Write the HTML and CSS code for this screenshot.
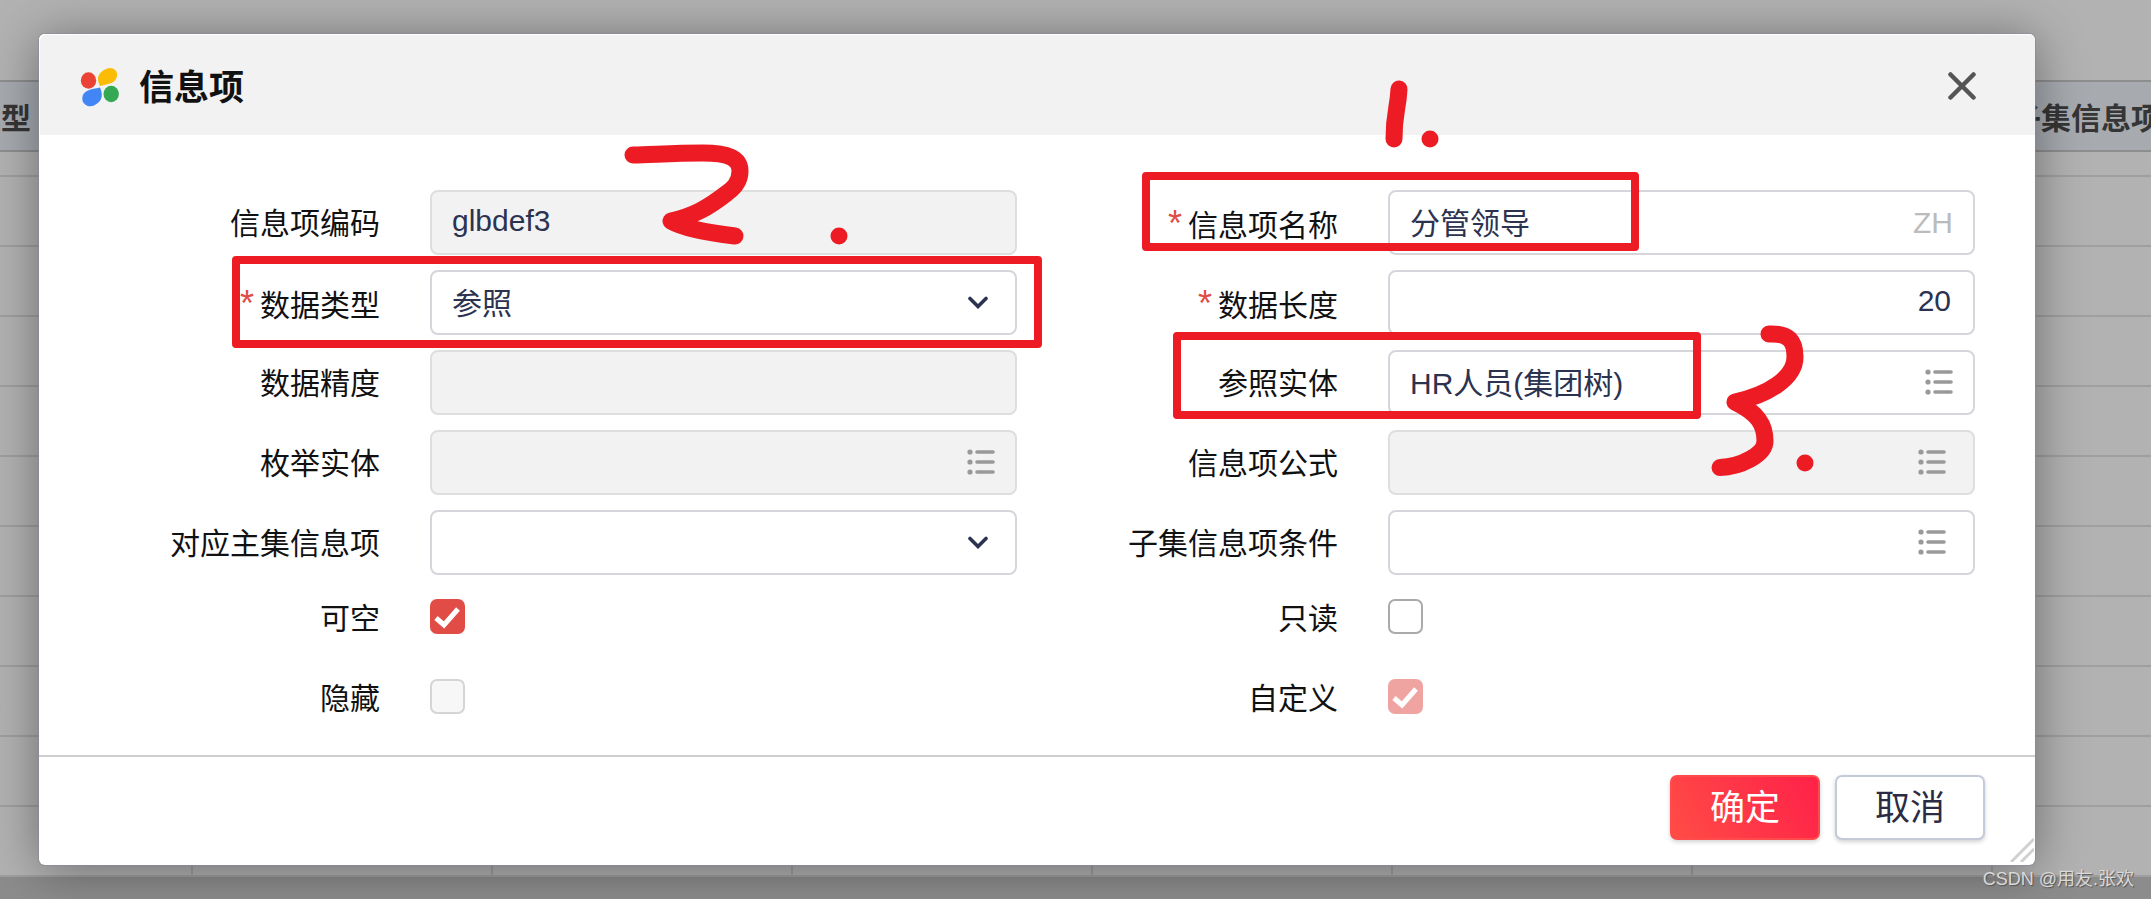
FILE: index.html
```
<!DOCTYPE html>
<html lang="zh-CN">
<head>
    <meta charset="UTF-8">
    <meta name="viewport" content="width=device-width, initial-scale=1.0">
    <title>信息项</title>
    <link rel="stylesheet" href="styles.css">
</head>
<body>

    <svg class="icon-defs" aria-hidden="true">
        <symbol id="icon-list" viewBox="0 0 28 26">
            <g fill="currentColor">
                <circle cx="3" cy="3" r="2.6"/>
                <circle cx="3" cy="13" r="2.6"/>
                <circle cx="3" cy="23" r="2.6"/>
            </g>
            <path d="M10 3h16M10 13h16M10 23h16" fill="none" stroke="currentColor" stroke-width="3.6" stroke-linecap="round"/>
        </symbol>
        <symbol id="icon-down" viewBox="0 0 20 13">
            <path d="M2 2.5l8 8 8-8" fill="none" stroke="currentColor" stroke-width="3.6" stroke-linecap="round"/>
        </symbol>
    </svg>

    <div class="page">
        <table class="grid-table">
            <thead>
                <tr><th>数据类型</th><th></th><th></th><th></th><th></th><th></th><th></th><th>子集信息项条件</th></tr>
            </thead>
            <tbody>
                <tr class="row-cut"><td></td><td></td><td></td><td></td><td></td><td></td><td></td><td></td></tr>
                <tr><td></td><td></td><td></td><td></td><td></td><td></td><td></td><td></td></tr>
                <tr><td></td><td></td><td></td><td></td><td></td><td></td><td></td><td></td></tr>
                <tr><td></td><td></td><td></td><td></td><td></td><td></td><td></td><td></td></tr>
                <tr><td></td><td></td><td></td><td></td><td></td><td></td><td></td><td></td></tr>
                <tr><td></td><td></td><td></td><td></td><td></td><td></td><td></td><td></td></tr>
                <tr><td></td><td></td><td></td><td></td><td></td><td></td><td></td><td></td></tr>
                <tr><td></td><td></td><td></td><td></td><td></td><td></td><td></td><td></td></tr>
                <tr><td>长文本</td><td></td><td></td><td></td><td></td><td></td><td></td><td></td></tr>
                <tr><td></td><td></td><td></td><td></td><td></td><td></td><td></td><td></td></tr>
                <tr class="row-last"><td></td><td></td><td></td><td></td><td></td><td></td><td></td><td></td></tr>
            </tbody>
        </table>
    </div>

    <div class="overlay">
        <form class="dialog" role="dialog" aria-labelledby="dialog-title">
            <header class="dialog-header">
                <svg class="logo" viewBox="0 0 40 40" aria-hidden="true">
                    <ellipse cx="8.500" cy="13.500" rx="7.700" ry="8.300" fill="#ea4335"/>
                    <path d="M20 19C16 11 18 6 26 2C32-1 38 3 37 9C36 16 29 17 20 19Z" fill="#fbbc05"/>
                    <path d="M20 20.500C24 30 21 35 14 38.500C8 41 2 37 2.300 31C3 23 11 22.500 20 20.500Z" fill="#4285f4"/>
                    <ellipse cx="31.200" cy="27" rx="7.700" ry="8.300" fill="#34a853"/>
                </svg>
                <h1 id="dialog-title">信息项</h1>
                <button type="button" class="close" aria-label="关闭">
                    <svg viewBox="0 0 28 28"><path d="M2.500 2.500l23 23M25.500 2.500l-23 23"/></svg>
                </button>
            </header>

            <main class="dialog-body">
                <div class="item">
                    <label for="code">信息项编码</label>
                    <div class="field"><input type="text" id="code" value="glbdef3" disabled></div>
                </div>
                <div class="item required">
                    <label for="name">信息项名称</label>
                    <div class="field">
                        <input type="text" id="name" value="分管领导">
                        <span class="suffix lang">ZH</span>
                    </div>
                </div>
                <div class="item required">
                    <label for="type">数据类型</label>
                    <div class="field">
                        <select id="type"><option>参照</option></select>
                        <svg class="suffix down"><use href="#icon-down"/></svg>
                    </div>
                </div>
                <div class="item required">
                    <label for="length">数据长度</label>
                    <div class="field"><input type="text" id="length" class="number" value="20"></div>
                </div>
                <div class="item">
                    <label for="precision">数据精度</label>
                    <div class="field"><input type="text" id="precision" disabled></div>
                </div>
                <div class="item">
                    <label for="ref">参照实体</label>
                    <div class="field">
                        <input type="text" id="ref" value="HR人员(集团树)">
                        <svg class="suffix list edge"><use href="#icon-list"/></svg>
                    </div>
                </div>
                <div class="item">
                    <label for="enum">枚举实体</label>
                    <div class="field">
                        <input type="text" id="enum" disabled>
                        <svg class="suffix list edge"><use href="#icon-list"/></svg>
                    </div>
                </div>
                <div class="item">
                    <label for="formula">信息项公式</label>
                    <div class="field">
                        <input type="text" id="formula" disabled>
                        <svg class="suffix list"><use href="#icon-list"/></svg>
                    </div>
                </div>
                <div class="item">
                    <label for="main-item">对应主集信息项</label>
                    <div class="field">
                        <select id="main-item"><option></option></select>
                        <svg class="suffix down"><use href="#icon-down"/></svg>
                    </div>
                </div>
                <div class="item">
                    <label for="condition">子集信息项条件</label>
                    <div class="field">
                        <input type="text" id="condition">
                        <svg class="suffix list"><use href="#icon-list"/></svg>
                    </div>
                </div>
                <div class="item check">
                    <label for="nullable">可空</label>
                    <div class="field">
                        <input type="checkbox" id="nullable" checked>
                        <svg class="tick" viewBox="0 0 35 35"><path d="M6 19l8 7 14-16"/></svg>
                    </div>
                </div>
                <div class="item check">
                    <label for="readonly">只读</label>
                    <div class="field"><input type="checkbox" id="readonly"></div>
                </div>
                <div class="item check">
                    <label for="hidden">隐藏</label>
                    <div class="field"><input type="checkbox" id="hidden" disabled></div>
                </div>
                <div class="item check">
                    <label for="custom">自定义</label>
                    <div class="field">
                        <input type="checkbox" id="custom" checked disabled>
                        <svg class="tick" viewBox="0 0 35 35"><path d="M6 19l8 7 14-16"/></svg>
                    </div>
                </div>
            </main>

            <footer class="dialog-footer">
                <button type="submit" class="btn primary">确定</button>
                <button type="button" class="btn">取消</button>
                <svg class="resize" viewBox="0 0 24 24" aria-hidden="true"><path d="M1 24L24 1M11 24L24 11"/></svg>
            </footer>
        </form>
    </div>

    <!-- Hand-drawn marks for the three steps -->
    <svg class="marks" width="2151" height="899" aria-hidden="true">
        <g class="boxes">
            <rect x="1146" y="176" width="489" height="71"/>
            <rect x="236" y="260" width="802" height="84"/>
            <rect x="1177" y="336" width="520" height="79"/>
        </g>
        <g class="strokes">
            <path d="M1399 89C1398 110 1394 112 1394 139"/>
            <path d="M1430 139v.1"/>
            <path d="M633 155C650 155 670 153 703 153C728 153 740 158 740 171C740 184 731 190 727 193C708 208 693 216 671 221C685 229 710 233 735 236"/>
            <path d="M839 236v.1"/>
            <path d="M1769 334C1789 333 1795 341 1795 357C1795 378 1768 395 1735 402C1758 413 1765 425 1765 441C1765 455 1740 467 1720 467.500"/>
            <path d="M1805 463v.1"/>
        </g>
    </svg>
    <div class="watermark">CSDN @用友.张欢</div>

</body>
</html>
```
FILE: styles.css
```
:root {
    --text-color: #111111;
    --value-color: #2b3350;
    --border-color: #d5d5dc;
    --disabled-bg: #f2f2f2;
    --icon-grey: #999999;
    --red: #e14c46;
    --mark-red: #ed1c24;
    --font-family: "Liberation Sans", "Noto Sans CJK SC", sans-serif;
}
* {
    box-sizing: border-box;
}
body {
    margin: 0;
    height: 100vh;
    overflow: hidden;
    position: relative;
    font-family: var(--font-family);
    font-size: 30px;
    color: var(--text-color);
    background: #c9c9c9;
}
.icon-defs {
    position: absolute;
    width: 0;
    height: 0;
}

/* Page behind the dialog */
.page {
    padding-top: 80px;
    overflow: hidden;
    background: #ffffff;
}
.grid-table {
    width: 2400px;
    margin-left: -107px;
    table-layout: fixed;
    border-collapse: separate;
    border-spacing: 0;
}
.grid-table th {
    height: 72px;
    padding: 0 18px;
    text-align: left;
    white-space: nowrap;
    color: #4d4d4d;
    background: #f0f5fd;
    border-top: 2px solid #cccccc;
    border-bottom: 2px solid #cccccc;
}
.grid-table td {
    height: 70px;
    padding: 0 18px;
    line-height: 40px;
    border-bottom: 2px solid #e4e4e4;
}
.grid-table .row-cut td {
    height: 25px;
}
.grid-table .row-last td {
    border-right: 2px solid #e4e4e4;
}

.overlay {
    position: absolute;
    inset: 0;
    padding: 34px 116px 34px 39px;
    background: rgba(0, 0, 0, 0.3);
}

/* Dialog */
.dialog {
    background: #ffffff;
    border-radius: 6px;
    box-shadow: 0 0 0 1px rgba(140, 135, 150, 0.6), 0 4px 50px rgba(0, 0, 0, 0.4);
}
.dialog-header {
    display: flex;
    align-items: center;
    height: 101px;
    padding: 4px 59px 0 41px;
    background: #f2f2f2;
    border-radius: 6px 6px 0 0;
    box-shadow: inset 1px 1px 0 #ffffff;
}
.logo {
    width: 40px;
    height: 40px;
}
.dialog-header h1 {
    flex: 1;
    margin: 2px 0 0 19px;
    font-size: 35px;
    line-height: 52px;
}
.close {
    display: flex;
    padding: 0 0 2px;
    border: none;
    background: none;
    cursor: pointer;
}
.close svg {
    width: 28px;
    height: 28px;
    fill: none;
    stroke: #555555;
    stroke-width: 4.5;
    stroke-linecap: round;
}
.dialog-body {
    display: grid;
    grid-template-columns: 1fr 1fr;
    row-gap: 15px;
    padding: 55px 60px 20px 20px;
}
.item {
    display: flex;
    gap: 50px;
    height: 65px;
}
.item label {
    flex: 0 0 321px;
    line-height: 68px;
    text-align: right;
}
.item.required label {
    line-height: 72px;
}
.item.required label::before {
    content: "*";
    margin-right: 6px;
    font-size: 36px;
    line-height: 1;
    color: var(--red);
}
.field {
    flex: 1;
    position: relative;
}
.field input[type="text"],
.field select {
    display: block;
    width: 100%;
    height: 65px;
    padding: 0 22px 4px 20px;
    appearance: none;
    font-family: var(--font-family);
    font-size: 30px;
    color: var(--value-color);
    background: #ffffff;
    border: 2px solid var(--border-color);
    border-radius: 8px;
    opacity: 1;
}
.field select {
    padding-top: 2px;
    padding-bottom: 0;
}
.field input[type="text"]:disabled {
    background: var(--disabled-bg);
    border-color: #dedede;
}
.field .number {
    text-align: right;
}
.suffix {
    position: absolute;
    pointer-events: none;
}
.suffix.lang {
    right: 22px;
    top: 0;
    line-height: 65px;
    color: #bbbbbb;
}
.suffix.down {
    right: 29px;
    top: 26px;
    width: 20px;
    height: 13px;
    color: var(--value-color);
}
.suffix.list {
    right: 29px;
    top: 19px;
    width: 28px;
    height: 26px;
    color: var(--icon-grey);
}
.suffix.list.edge {
    right: 22px;
}

.check label {
    line-height: 57px;
}
.check input {
    display: block;
    width: 35px;
    height: 35px;
    margin: 9px 0 0;
    appearance: none;
    background: #ffffff;
    border: 2px solid #aaaaaa;
    border-radius: 7px;
}
.check input:disabled {
    background: #f7f7f7;
    border-color: #d5d5d5;
}
.check input:checked {
    background: var(--red);
    border-color: var(--red);
}
.check input:checked:disabled {
    opacity: 0.5;
}
.tick {
    position: absolute;
    left: 0;
    top: 9px;
    width: 35px;
    height: 35px;
    fill: none;
    stroke: #ffffff;
    stroke-width: 5;
    pointer-events: none;
}

.dialog-footer {
    position: relative;
    display: flex;
    justify-content: flex-end;
    gap: 15px;
    padding: 18px 50px 25px;
    border-top: 2px solid #cfcfcf;
}
.btn {
    width: 150px;
    height: 65px;
    padding: 0;
    font-family: var(--font-family);
    font-size: 35px;
    line-height: 61px;
    color: #2b2b44;
    background: #ffffff;
    border: 2px solid #c5cad9;
    border-radius: 7px;
    box-shadow: 0 2px 4px rgba(0, 0, 0, 0.18);
    cursor: pointer;
}
.btn.primary {
    color: #ffffff;
    background: linear-gradient(60deg, #ff4c46, #ff2149);
    border-color: #ff4b4b;
}
.resize {
    position: absolute;
    right: 1px;
    bottom: 3px;
    width: 24px;
    height: 24px;
    stroke: #d0d0d0;
    stroke-width: 3;
}

.marks {
    position: absolute;
    left: 0;
    top: 0;
    fill: none;
    stroke: var(--mark-red);
    stroke-linejoin: round;
    stroke-linecap: round;
    pointer-events: none;
}
.boxes {
    stroke-width: 8;
}
.strokes {
    stroke-width: 17;
}
.watermark {
    position: absolute;
    right: 17px;
    bottom: 7px;
    font-size: 18px;
    line-height: 26px;
    color: #d9d9d9;
    text-shadow: 1px 1px 1px #555555;
}
```
